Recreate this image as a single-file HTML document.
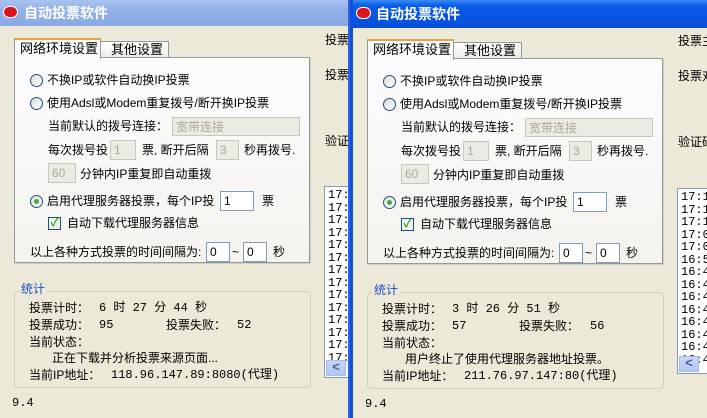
<!DOCTYPE html>
<html><head><meta charset="utf-8"><style>
*{margin:0;padding:0;box-sizing:border-box}
body{width:707px;height:418px;overflow:hidden;background:#ece9d8;position:relative;font-family:"Liberation Sans","Noto Sans CJK SC",sans-serif;font-size:12px;color:#000}
.win{position:absolute;top:0;height:418px;overflow:hidden;background:#ece9d8}
.in{position:absolute;left:0;top:0;width:400px;height:420px}
.a{position:absolute;white-space:nowrap;line-height:14px}
.tb{position:absolute;left:0;top:0;right:0}
.ttl{position:absolute;color:#fff;font-weight:bold;font-size:14px;line-height:16px}
.ico{position:absolute;width:15px;height:12px;border-radius:6px;background:#d8161b;border:1px solid #fff}
.panel{position:absolute;left:14px;top:57px;width:296px;height:206px;border:1px solid #919b9c;background:linear-gradient(#fcfcfe,#f4f3ee);box-shadow:1px 1px 0 #d0cfc6}
.tab{position:absolute;border:1px solid #919b9c;border-bottom:none;background:linear-gradient(#fff,#ecebe6);}
.tab.sel{background:#fcfcfe;border-top:2px solid #e8a33c}
.rad{position:absolute;width:13px;height:13px;border-radius:50%;border:1px solid #1c5180;background:linear-gradient(135deg,#dcdcd6,#fff)}
.rad.on:after{content:"";position:absolute;left:3px;top:3px;width:5px;height:5px;border-radius:50%;background:#3dab3d}
.inp{position:absolute;height:20px;border:1px solid #7f9db9;background:#fff;padding-left:3px;line-height:18px;font-size:12px}
.inp.dis{background:#ebebe4;border-color:#c9c7ba;color:#aca899}
.chk{position:absolute;width:13px;height:13px;border:1px solid #1c5180;background:#f0f0ea;color:#21a121;font-size:11px;line-height:11px;text-align:center;font-weight:bold}
.grp{position:absolute;left:14px;top:291px;width:297px;height:97px;border:1px solid #d0d0bf;border-radius:4px}
.list{position:absolute;background:#fff;border:1px solid #7f9db9;font-family:"Liberation Mono",monospace;font-size:12px;line-height:12.5px;padding:2px 0 0 3px;overflow:hidden}
.sb{position:absolute;left:1px;height:16px;width:20px;background:linear-gradient(#c8d7fb,#b0c6f6);border:1px solid #a8bce8;color:#4d6185;font-size:13px;font-weight:bold;line-height:13px;text-align:center}
.mono{font-family:"Liberation Mono",monospace}
</style></head><body>

<!-- LEFT WINDOW -->
<div class="win" style="left:0;width:350px">
 <div class="tb" style="height:26px;background:linear-gradient(#a9c2f0,#93b1e8 40%,#8aa9e4)"></div>
 <div class="ico" style="left:3px;top:6px"></div>
 <div class="ttl" style="left:24px;top:5px">自动投票软件</div>
 <div class="in">
  <div class="tab" style="left:100px;top:41px;width:69px;height:17px"></div>
  <div class="a" style="left:111px;top:43px;font-size:13px">其他设置</div>
  <div class="panel"></div>
  <div class="tab sel" style="left:14px;top:38px;width:87px;height:21px;border-bottom:none"></div>
  <div class="a" style="left:20px;top:42px;font-size:13px">网络环境设置</div>
  <div class="rad" style="left:30px;top:74px"></div><div class="a" style="left:47px;top:73px">不换IP或软件自动换IP投票</div>
  <div class="rad" style="left:30px;top:97px"></div><div class="a" style="left:47px;top:96px">使用Adsl或Modem重复拨号/断开换IP投票</div>
  <div class="a" style="left:48px;top:119px">当前默认的拨号连接：</div>
  <div class="inp dis" style="left:172px;top:117px;width:128px;height:19px">宽带连接</div>
  <div class="a" style="left:48px;top:143px">每次拨号投</div><div class="inp dis" style="left:110px;top:140px;width:26px">1</div>
  <div class="a" style="left:142px;top:143px">票, 断开后隔</div><div class="inp dis" style="left:216px;top:140px;width:23px">3</div>
  <div class="a" style="left:244px;top:143px">秒再拨号.</div>
  <div class="inp dis" style="left:48px;top:163px;width:28px">60</div><div class="a" style="left:80px;top:167px">分钟内IP重复即自动重拨</div>
  <div class="rad on" style="left:30px;top:195px"></div><div class="a" style="left:47px;top:194px">启用代理服务器投票，每个IP投</div>
  <div class="inp" style="left:220px;top:191px;width:34px">1</div><div class="a" style="left:262px;top:194px">票</div>
  <div class="chk" style="left:48px;top:217px">✓</div><div class="a" style="left:67px;top:216px">自动下载代理服务器信息</div>
  <div class="a" style="left:30px;top:245px">以上各种方式投票的时间间隔为:</div>
  <div class="inp" style="left:206px;top:242px;width:24px">0</div><div class="a" style="left:232px;top:245px">~</div>
  <div class="inp" style="left:243px;top:242px;width:24px">0</div><div class="a" style="left:273px;top:245px">秒</div>
  <div class="grp"></div>
  <div class="a" style="left:19px;top:282px;color:#1a4ec9;background:#ece9d8;padding:0 2px">统计</div>
  <div class="a" style="left:29px;top:301px">投票计时：</div><div class="a mono" style="left:99px;top:301px">6 时 27 分 44 秒</div>
  <div class="a" style="left:29px;top:318px">投票成功：</div><div class="a mono" style="left:99px;top:318px">95</div>
  <div class="a" style="left:166px;top:318px">投票失败：</div><div class="a mono" style="left:237px;top:318px">52</div>
  <div class="a" style="left:29px;top:335px">当前状态：</div>
  <div class="a" style="left:52px;top:351px">正在下载并分析投票来源页面...</div>
  <div class="a" style="left:29px;top:368px">当前IP地址：</div><div class="a mono" style="left:111px;top:368px">118.96.147.89:8080(代理)</div>
  <div class="a mono" style="left:12px;top:396px">9.4</div>
  <div class="a" style="left:325px;top:33px">投票主</div>
  <div class="a" style="left:325px;top:68px">投票对</div>
  <div class="a" style="left:325px;top:134px">验证码</div>
  <div class="list" style="left:324px;top:186px;width:60px;height:192px">17:2<br>17:2<br>17:2<br>17:2<br>17:2<br>17:2<br>17:2<br>17:2<br>17:2<br>17:2<br>17:1<br>17:1<br>17:1<br>17:1
   <div class="sb" style="top:173px">&lt;</div></div>
 </div>
 <div style="position:absolute;right:0;top:0;width:2px;height:418px;background:#2d62d8"></div>
</div>

<!-- RIGHT WINDOW -->
<div class="win" style="left:350px;width:357px">
 <div class="tb" style="height:28px;background:linear-gradient(#3d8cf5,#0a5de6 20%,#0554e2 70%,#0a4fd4)"></div>
 <div style="position:absolute;left:0;top:0;width:3px;height:418px;background:#0a52de"></div>
 <div class="ico" style="left:6px;top:7px"></div>
 <div class="ttl" style="left:26px;top:6px">自动投票软件</div>
 <div class="in" style="left:353px;top:1px;left:3px">
  <div class="tab" style="left:100px;top:41px;width:69px;height:17px"></div>
  <div class="a" style="left:111px;top:43px;font-size:13px">其他设置</div>
  <div class="panel"></div>
  <div class="tab sel" style="left:14px;top:38px;width:87px;height:21px"></div>
  <div class="a" style="left:20px;top:42px;font-size:13px">网络环境设置</div>
  <div class="rad" style="left:30px;top:74px"></div><div class="a" style="left:47px;top:73px">不换IP或软件自动换IP投票</div>
  <div class="rad" style="left:30px;top:97px"></div><div class="a" style="left:47px;top:96px">使用Adsl或Modem重复拨号/断开换IP投票</div>
  <div class="a" style="left:48px;top:119px">当前默认的拨号连接：</div>
  <div class="inp dis" style="left:172px;top:117px;width:128px;height:19px">宽带连接</div>
  <div class="a" style="left:48px;top:143px">每次拨号投</div><div class="inp dis" style="left:110px;top:140px;width:26px">1</div>
  <div class="a" style="left:142px;top:143px">票, 断开后隔</div><div class="inp dis" style="left:216px;top:140px;width:23px">3</div>
  <div class="a" style="left:244px;top:143px">秒再拨号.</div>
  <div class="inp dis" style="left:48px;top:163px;width:28px">60</div><div class="a" style="left:80px;top:167px">分钟内IP重复即自动重拨</div>
  <div class="rad on" style="left:30px;top:195px"></div><div class="a" style="left:47px;top:194px">启用代理服务器投票，每个IP投</div>
  <div class="inp" style="left:220px;top:191px;width:34px">1</div><div class="a" style="left:262px;top:194px">票</div>
  <div class="chk" style="left:48px;top:217px">✓</div><div class="a" style="left:67px;top:216px">自动下载代理服务器信息</div>
  <div class="a" style="left:30px;top:245px">以上各种方式投票的时间间隔为:</div>
  <div class="inp" style="left:206px;top:242px;width:24px">0</div><div class="a" style="left:232px;top:245px">~</div>
  <div class="inp" style="left:243px;top:242px;width:24px">0</div><div class="a" style="left:273px;top:245px">秒</div>
  <div class="grp"></div>
  <div class="a" style="left:19px;top:282px;color:#1a4ec9;background:#ece9d8;padding:0 2px">统计</div>
  <div class="a" style="left:29px;top:301px">投票计时：</div><div class="a mono" style="left:99px;top:301px">3 时 26 分 51 秒</div>
  <div class="a" style="left:29px;top:318px">投票成功：</div><div class="a mono" style="left:99px;top:318px">57</div>
  <div class="a" style="left:166px;top:318px">投票失败：</div><div class="a mono" style="left:237px;top:318px">56</div>
  <div class="a" style="left:29px;top:335px">当前状态：</div>
  <div class="a" style="left:52px;top:351px">用户终止了使用代理服务器地址投票。</div>
  <div class="a" style="left:29px;top:368px">当前IP地址：</div><div class="a mono" style="left:111px;top:368px">211.76.97.147:80(代理)</div>
  <div class="a mono" style="left:12px;top:396px">9.4</div>
  <div class="a" style="left:325px;top:33px">投票主</div>
  <div class="a" style="left:325px;top:68px">投票对</div>
  <div class="a" style="left:325px;top:134px">验证码</div>
  <div class="list" style="left:324px;top:187px;width:60px;height:186px">17:10<br>17:10<br>17:10<br>17:09<br>17:09<br>16:55<br>16:45<br>16:45<br>16:45<br>16:45<br>16:45<br>16:45<br>16:45<br>16:45
   <div class="sb" style="top:167px">&lt;</div></div>
 </div>
</div>
</body></html>
